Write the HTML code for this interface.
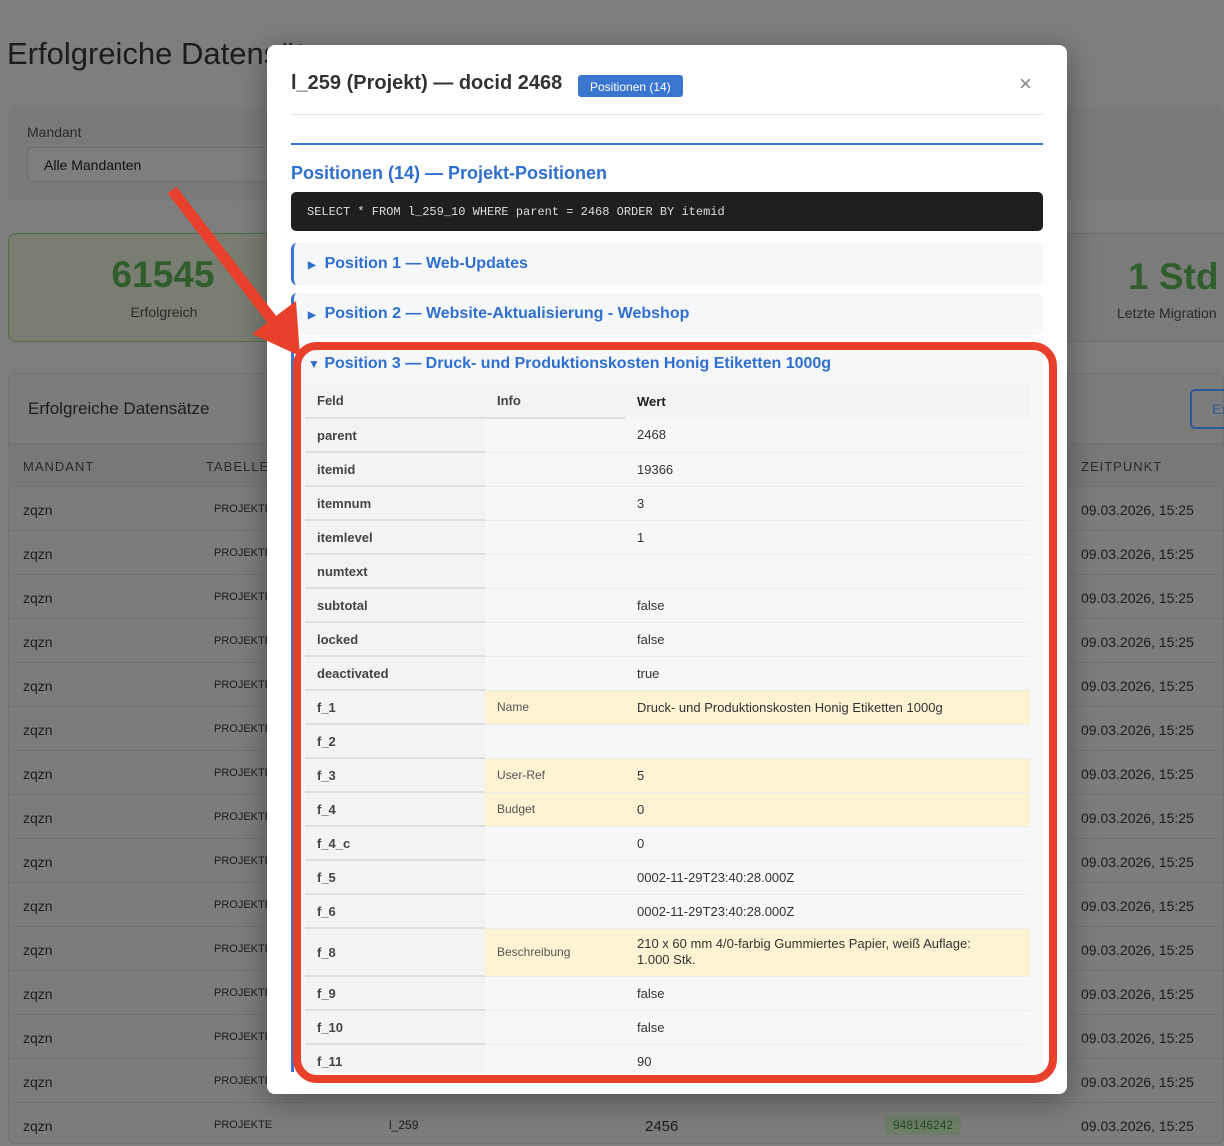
<!DOCTYPE html>
<html><head><meta charset="utf-8"><style>
*{box-sizing:border-box;margin:0;padding:0}
body{width:1224px;height:1144px;overflow:hidden;background:#7e7e7e;font-family:"Liberation Sans",Arial,sans-serif;position:relative}
.abs{position:absolute}
.t{color:#1c1c1c}
.row{position:absolute;left:8px;width:1216px;height:44px;border-top:1px solid #727272;font-size:14px;color:#1c1c1c}
.row span{position:absolute;top:15px}
.modal{position:absolute;left:267px;top:45px;width:800px;height:1049px;background:#fff;border-radius:8px;overflow:hidden;box-shadow:0 6px 30px rgba(0,0,0,.35)}
.pos{position:absolute;left:24px;width:752px;background:#f6f7f9;border-left:3px solid #3a76d0;border-radius:6px;color:#2e6fd0;font-weight:bold;font-size:16px}
table{border-collapse:collapse;width:725px;font-size:13px;color:#333}
td,th{height:34px;padding:0 12px;text-align:left;vertical-align:middle}
td.f,th.f{width:180px;background:#f3f3f3;font-weight:bold;color:#444;border-bottom:2px solid #ddd}
td.i{width:140px;font-size:12px;color:#555;border-bottom:1px solid #ececec}
td.w{border-bottom:1px solid #ececec;padding-right:40px}
tr.y td.i,tr.y td.w{background:#fdf3d3}
th{background:#f3f3f3;color:#444}
</style></head><body>
<div class="abs t" style="left:7px;top:36px;font-size:31px;">Erfolgreiche Datensätze</div>
<div class="abs" style="left:8px;top:107px;width:1216px;height:94px;background:#7a7a7a;border-radius:8px"></div>
<div class="abs" style="left:27px;top:124px;font-size:14px;color:#2a2a2a">Mandant</div>
<div class="abs" style="left:27px;top:147px;width:300px;height:35px;background:#7e7e7e;border:1px solid #6e6e6e;border-radius:4px;font-size:14px;color:#111;padding:9px 16px">Alle Mandanten</div>
<div class="abs" style="left:8px;top:233px;width:300px;height:109px;background:#7a7d72;border:1px solid #4e7046;border-radius:8px;text-align:center">
<div style="font-size:37px;font-weight:bold;color:#2f5e2c;margin-top:20px;padding-left:10px">61545</div>
<div style="font-size:14px;color:#2a2a2a;margin-top:8px;padding-left:12px">Erfolgreich</div></div>
<div class="abs" style="left:1060px;top:233px;width:170px;height:109px;background:#7b7b7b;border:1px solid #6e6e6e;border-radius:8px 0 0 8px">
<div style="position:absolute;left:67px;top:22px;font-size:37px;font-weight:bold;color:#2f5e2c;white-space:nowrap">1 Std</div>
<div style="position:absolute;left:56px;top:71px;font-size:14px;color:#2a2a2a;white-space:nowrap">Letzte Migration</div></div>
<div class="abs" style="left:8px;top:373px;width:1216px;height:771px;background:#7c7c7c;border:1px solid #707070;border-radius:8px"></div>
<div class="abs t" style="left:28px;top:399px;font-size:17px">Erfolgreiche Datensätze</div>
<div class="abs" style="left:1190px;top:389px;width:50px;height:40px;border:2px solid #2a5a9a;border-radius:5px;color:#2a5a9a;padding:10px 20px;font-size:14px">Ex</div>
<div class="row" style="top:443px;background:#787878;height:43px"><span style="left:15px;font-size:13px;letter-spacing:1px;color:#2a2a2a">MANDANT</span><span style="left:198px;font-size:13px;letter-spacing:1px;color:#2a2a2a">TABELLE</span><span style="left:1073px;font-size:13px;letter-spacing:1px;color:#2a2a2a">ZEITPUNKT</span></div>
<div id="rows"></div>
<div class="row" style="top:1102px"><span style="left:15px">zqzn</span><span style="left:206px;font-size:11px;top:16px">PROJEKTE</span><span style="left:381px;font-size:12px">l_259</span><span style="left:637px;font-size:15px">2456</span><span style="left:877px;top:12px;font-size:12px;background:#6e7d68;color:#254a22;padding:3px 8px;border-radius:3px">948146242</span><span style="left:1073px">09.03.2026, 15:25</span></div>
<script>
var h='';for(var i=0;i<14;i++){h+='<div class="row" style="top:'+(486+i*44)+'px"><span style="left:15px">zqzn</span><span style="left:206px;font-size:11px;top:16px">PROJEKTE</span><span style="left:1073px">09.03.2026, 15:25</span></div>';}
document.getElementById('rows').innerHTML=h;
</script>

<div class="modal">
<div class="abs" style="left:24px;top:27px;font-size:20px;font-weight:bold;color:#333">l_259 (Projekt) — docid 2468</div>
<div class="abs" style="left:311px;top:30px;height:22px;background:#3a76d0;color:#fff;font-size:12px;padding:5px 12px;border-radius:3px">Positionen (14)</div>
<div class="abs" style="left:752px;top:26px;font-size:22px;color:#888">×</div>
<div class="abs" style="left:24px;top:69px;width:752px;height:1px;background:#e5e5e5"></div>
<div class="abs" style="left:24px;top:98px;width:752px;height:2px;background:#3a76d0"></div>
<div class="abs" style="left:24px;top:118px;font-size:18px;font-weight:bold;color:#2e6fd0">Positionen (14) — Projekt-Positionen</div>
<div class="abs" style="left:24px;top:147px;width:752px;height:39px;background:#1f1f1f;border-radius:5px;color:#ddd;font-family:'Liberation Mono',monospace;font-size:12px;padding:13px 16px">SELECT * FROM l_259_10 WHERE parent = 2468 ORDER BY itemid</div>
<div class="pos" style="top:198px;height:42px;padding:12px 14px"><span style="font-size:10px">▶</span>&nbsp; Position 1 — Web-Updates</div>
<div class="pos" style="top:248px;height:42px;padding:12px 14px"><span style="font-size:10px">▶</span>&nbsp; Position 2 — Website-Aktualisierung - Webshop</div>
<div class="pos" style="top:298px;height:760px;padding:12px 14px"><span style="font-size:12px">▼</span> Position 3 — Druck- und Produktionskosten Honig Etiketten 1000g
<table style="margin-top:11px;margin-left:-3px;font-weight:normal">
<tr><th class="f" style="border-bottom:2px solid #ddd">Feld</th><th style="border-bottom:2px solid #ddd">Info</th><th style="color:#222">Wert</th></tr>
<tr><td class="f">parent</td><td class="i"></td><td class="w">2468</td></tr>
<tr><td class="f">itemid</td><td class="i"></td><td class="w">19366</td></tr>
<tr><td class="f">itemnum</td><td class="i"></td><td class="w">3</td></tr>
<tr><td class="f">itemlevel</td><td class="i"></td><td class="w">1</td></tr>
<tr><td class="f">numtext</td><td class="i"></td><td class="w"></td></tr>
<tr><td class="f">subtotal</td><td class="i"></td><td class="w">false</td></tr>
<tr><td class="f">locked</td><td class="i"></td><td class="w">false</td></tr>
<tr><td class="f">deactivated</td><td class="i"></td><td class="w">true</td></tr>
<tr class="y"><td class="f">f_1</td><td class="i">Name</td><td class="w">Druck- und Produktionskosten Honig Etiketten 1000g</td></tr>
<tr><td class="f">f_2</td><td class="i"></td><td class="w"></td></tr>
<tr class="y"><td class="f">f_3</td><td class="i">User-Ref</td><td class="w">5</td></tr>
<tr class="y"><td class="f">f_4</td><td class="i">Budget</td><td class="w">0</td></tr>
<tr><td class="f">f_4_c</td><td class="i"></td><td class="w">0</td></tr>
<tr><td class="f">f_5</td><td class="i"></td><td class="w">0002-11-29T23:40:28.000Z</td></tr>
<tr><td class="f">f_6</td><td class="i"></td><td class="w">0002-11-29T23:40:28.000Z</td></tr>
<tr class="y"><td class="f" style="height:48px">f_8</td><td class="i">Beschreibung</td><td class="w" style="line-height:16px">210 x 60 mm 4/0-farbig Gummiertes Papier, weiß Auflage: 1.000 Stk.</td></tr>
<tr><td class="f">f_9</td><td class="i"></td><td class="w">false</td></tr>
<tr><td class="f">f_10</td><td class="i"></td><td class="w">false</td></tr>
<tr><td class="f">f_11</td><td class="i"></td><td class="w">90</td></tr>
</table></div>
<div class="abs" style="left:0;top:1027px;width:800px;height:22px;background:#fff"></div>
</div>

<svg class="abs" style="left:0;top:0" width="1224" height="1144">
<rect x="297" y="346" width="756" height="733" rx="20" fill="none" stroke="#e8402a" stroke-width="8"/>
<line x1="172" y1="190" x2="280" y2="330" stroke="#e8402a" stroke-width="11"/>
<polygon points="252,334 296,301 300,356" fill="#e8402a"/>
</svg>
</body></html>
